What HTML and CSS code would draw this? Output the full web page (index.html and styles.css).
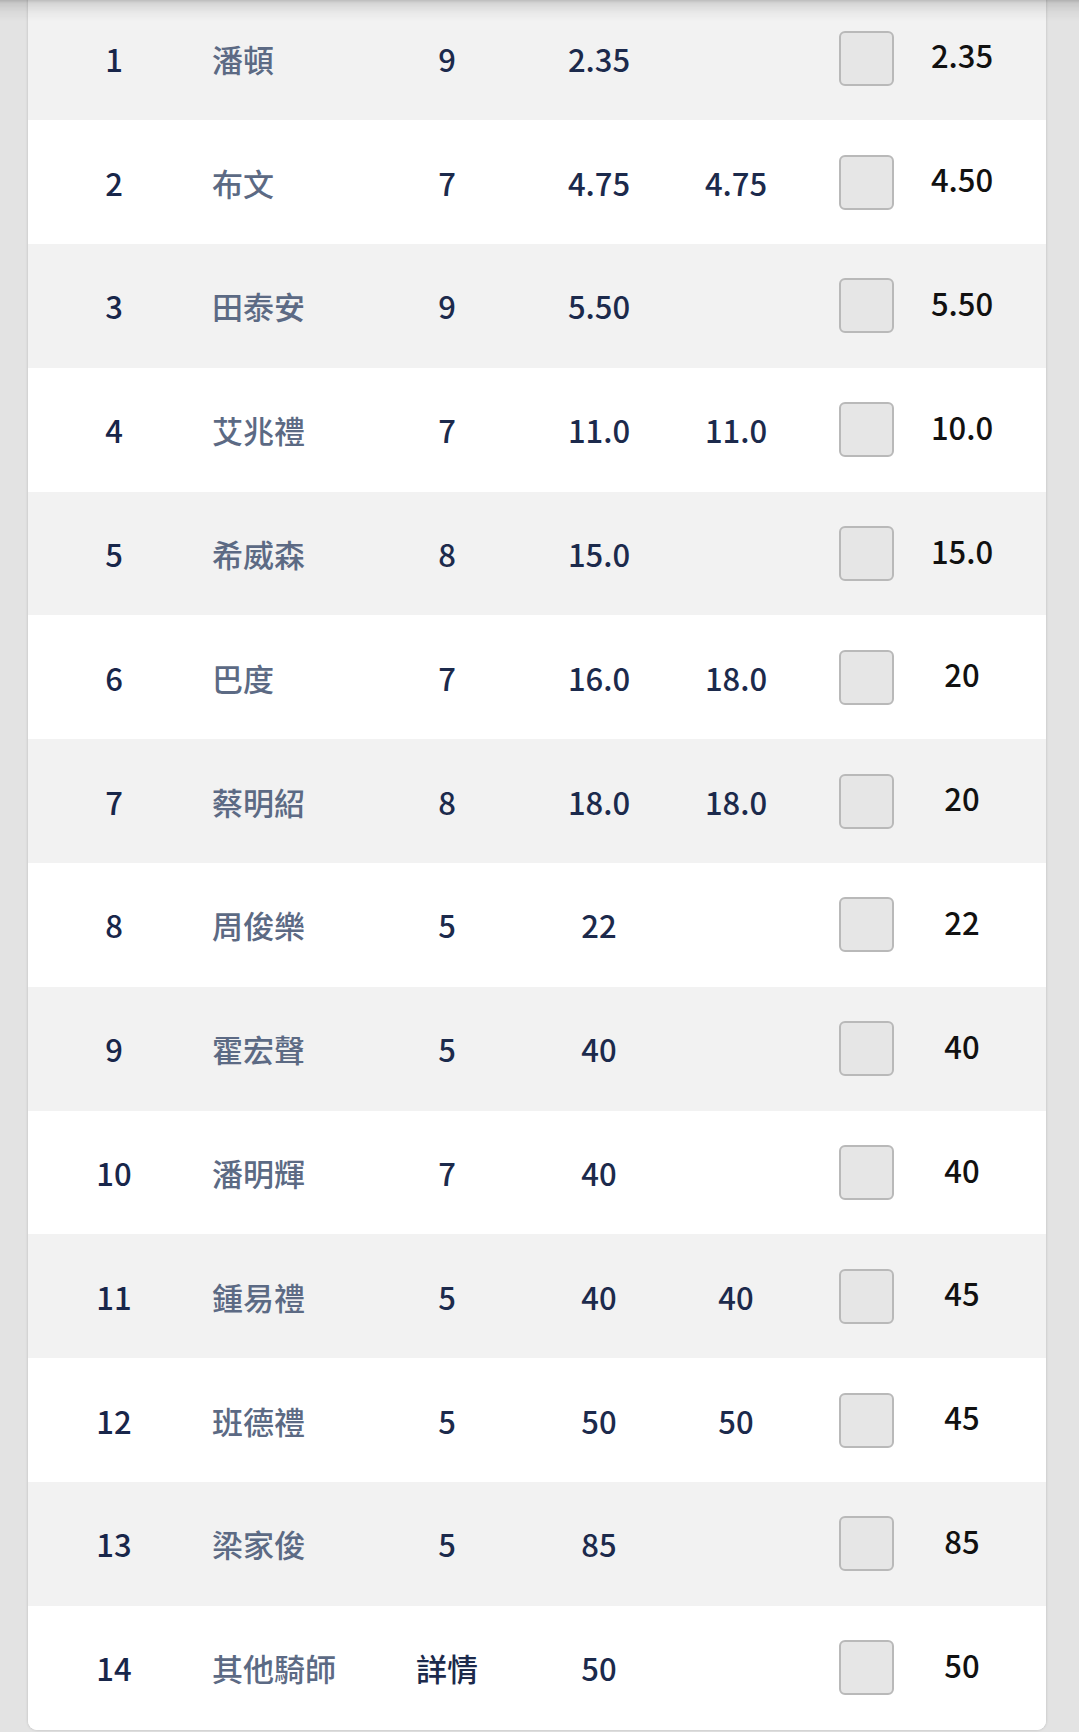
FILE: index.html
```html
<!DOCTYPE html>
<html lang="zh-Hant">
<head>
<meta charset="utf-8">
<title>騎師</title>
<link rel="stylesheet" href="styles.css">
</head>
<body>
<div class="top-shade"></div>
<div class="card">
  <div class="row odd"><div class="no">1</div><div class="name">潘頓</div><div class="num">9</div><div class="num">2.35</div><div class="num"></div><div class="cb"><span class="box"></span></div><div class="last">2.35</div></div>
  <div class="row"><div class="no">2</div><div class="name">布文</div><div class="num">7</div><div class="num">4.75</div><div class="num">4.75</div><div class="cb"><span class="box"></span></div><div class="last">4.50</div></div>
  <div class="row odd"><div class="no">3</div><div class="name">田泰安</div><div class="num">9</div><div class="num">5.50</div><div class="num"></div><div class="cb"><span class="box"></span></div><div class="last">5.50</div></div>
  <div class="row"><div class="no">4</div><div class="name">艾兆禮</div><div class="num">7</div><div class="num">11.0</div><div class="num">11.0</div><div class="cb"><span class="box"></span></div><div class="last">10.0</div></div>
  <div class="row odd"><div class="no">5</div><div class="name">希威森</div><div class="num">8</div><div class="num">15.0</div><div class="num"></div><div class="cb"><span class="box"></span></div><div class="last">15.0</div></div>
  <div class="row"><div class="no">6</div><div class="name">巴度</div><div class="num">7</div><div class="num">16.0</div><div class="num">18.0</div><div class="cb"><span class="box"></span></div><div class="last">20</div></div>
  <div class="row odd"><div class="no">7</div><div class="name">蔡明紹</div><div class="num">8</div><div class="num">18.0</div><div class="num">18.0</div><div class="cb"><span class="box"></span></div><div class="last">20</div></div>
  <div class="row"><div class="no">8</div><div class="name">周俊樂</div><div class="num">5</div><div class="num">22</div><div class="num"></div><div class="cb"><span class="box"></span></div><div class="last">22</div></div>
  <div class="row odd"><div class="no">9</div><div class="name">霍宏聲</div><div class="num">5</div><div class="num">40</div><div class="num"></div><div class="cb"><span class="box"></span></div><div class="last">40</div></div>
  <div class="row"><div class="no">10</div><div class="name">潘明輝</div><div class="num">7</div><div class="num">40</div><div class="num"></div><div class="cb"><span class="box"></span></div><div class="last">40</div></div>
  <div class="row odd"><div class="no">11</div><div class="name">鍾易禮</div><div class="num">5</div><div class="num">40</div><div class="num">40</div><div class="cb"><span class="box"></span></div><div class="last">45</div></div>
  <div class="row"><div class="no">12</div><div class="name">班德禮</div><div class="num">5</div><div class="num">50</div><div class="num">50</div><div class="cb"><span class="box"></span></div><div class="last">45</div></div>
  <div class="row odd"><div class="no">13</div><div class="name">梁家俊</div><div class="num">5</div><div class="num">85</div><div class="num"></div><div class="cb"><span class="box"></span></div><div class="last">85</div></div>
  <div class="row"><div class="no">14</div><div class="name">其他騎師</div><div class="num">詳情</div><div class="num">50</div><div class="num"></div><div class="cb"><span class="box"></span></div><div class="last">50</div></div>
</div>
</body>
</html>
```
FILE: styles.css
```css
html, body {
  margin: 0;
  padding: 0;
}
body {
  background: #e3e3e3;
  font-family: "Noto Sans CJK TC", "Noto Sans", sans-serif;
  overflow: hidden;
  height: 1732px;
}
.top-shade {
  position: fixed;
  top: 0;
  left: 0;
  right: 0;
  height: 22px;
  background: linear-gradient(to bottom, rgba(0,0,0,0.22) 0, rgba(0,0,0,0.12) 3px, rgba(0,0,0,0.04) 12px, rgba(0,0,0,0) 22px);
  z-index: 5;
}
.card {
  margin: -3.5px 33px 0 28px;
  background: #fff;
  border-radius: 0 0 9px 9px;
  overflow: hidden;
  box-shadow: 0 0 3px rgba(0,0,0,0.18);
}
.row {
  display: grid;
  grid-template-columns: 172px 178px 138px 166px 108px 104px 136px 1fr;
  align-items: center;
  height: 123.8px;
  background: #fff;
  font-size: 31px;
  font-weight: 500;
  color: #1c2a4c;
}
.row.odd {
  background: #f2f2f2;
}
.no {
  text-align: center;
  color: #18264a;
}
.name {
  padding-left: 12px;
  color: #5c6a84;
}
.num {
  text-align: center;
}
.cb {
  display: flex;
  justify-content: flex-end;
}
.box {
  box-sizing: border-box;
  width: 55px;
  height: 55px;
  background: #e6e6e6;
  border: 2px solid #b9b9b9;
  border-radius: 6px;
}
.last {
  text-align: center;
  color: #111;
  padding-bottom: 7px;
}
```
